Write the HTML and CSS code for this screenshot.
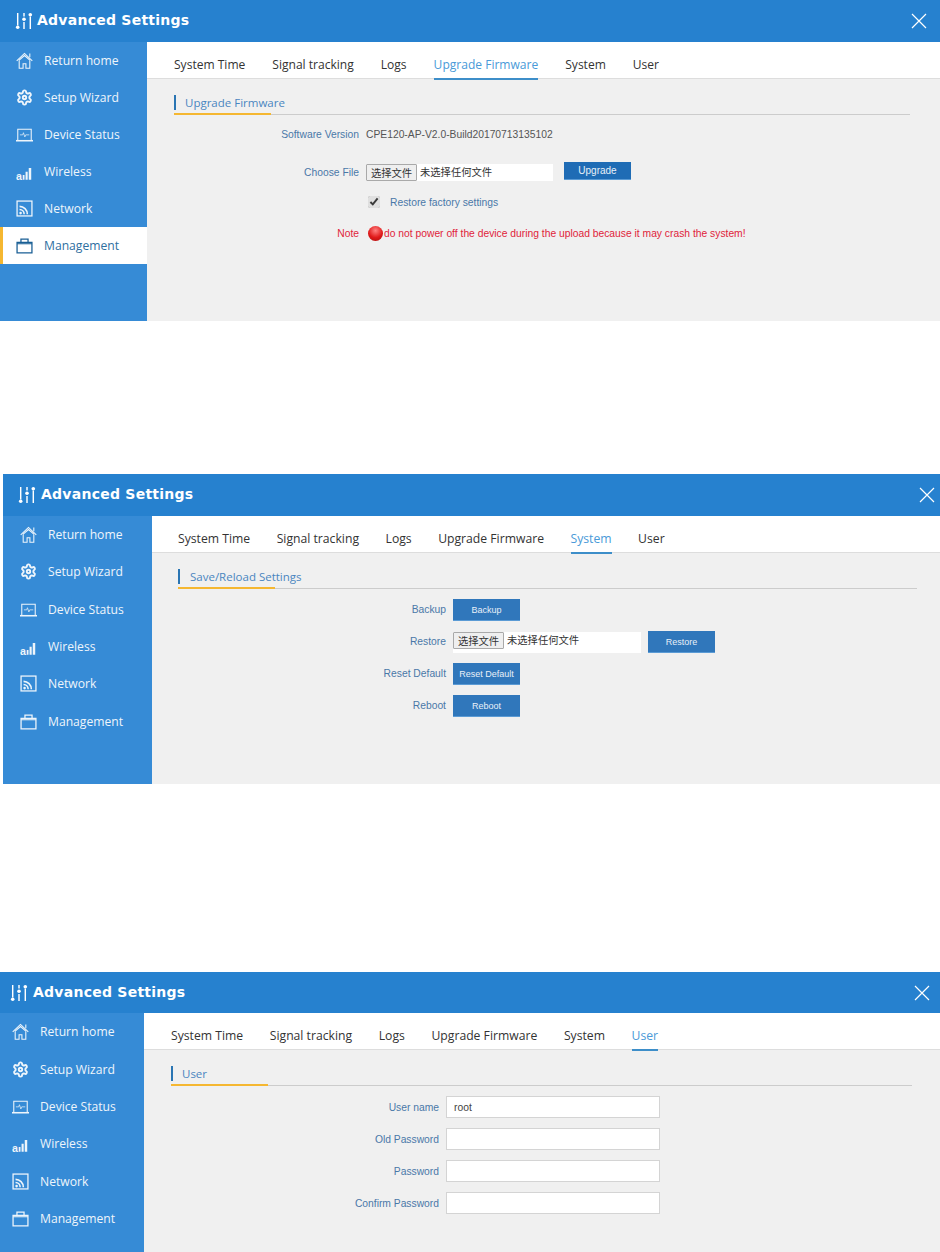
FILE: index.html
```html
<!DOCTYPE html>
<html lang="en">
<head>
    <meta charset="UTF-8">
    <title>Advanced Settings</title>
    <link rel="stylesheet" href="styles.css">
</head>
<body>
    <svg class="sprite" xmlns="http://www.w3.org/2000/svg">
        <symbol id="i-tune" viewBox="0 0 20 20">
            <path d="M3 1v14M10 1v4M10 11v8M17 5v14" fill="none" stroke="currentColor" stroke-width="1.6"/>
            <circle cx="3" cy="17" r="2" fill="currentColor"/>
            <circle cx="10" cy="8" r="2" fill="currentColor"/>
            <circle cx="17" cy="3" r="2" fill="currentColor"/>
        </symbol>
        <symbol id="i-close" viewBox="0 0 16 16">
            <path d="M1 1l14 14M15 1L1 15" fill="none" stroke="currentColor" stroke-width="1.2"/>
        </symbol>
        <symbol id="i-home" viewBox="0 0 24 24">
            <g fill="none" stroke="currentColor" stroke-width="1.5">
                <path d="M1 12.5L12 2l11 10.5M4.500 11.500L12 5l7.500 6.500"/>
                <path d="M4.500 11.500V23h5.500v-6.500h4V23h5.500V11.500M19.500 2v5.500"/>
            </g>
        </symbol>
        <symbol id="i-gear" viewBox="0 0 24 24">
            <g fill="none" stroke="currentColor" stroke-width="2.7">
                <path d="M12.22 2h-.44a2 2 0 0 0-2 2v.18a2 2 0 0 1-1 1.73l-.43.25a2 2 0 0 1-2 0l-.15-.08a2 2 0 0 0-2.73.73l-.22.38a2 2 0 0 0 .73 2.73l.15.1a2 2 0 0 1 1 1.72v.51a2 2 0 0 1-1 1.74l-.15.09a2 2 0 0 0-.73 2.73l.22.38a2 2 0 0 0 2.73.73l.15-.08a2 2 0 0 1 2 0l.43.25a2 2 0 0 1 1 1.73V20a2 2 0 0 0 2 2h.44a2 2 0 0 0 2-2v-.18a2 2 0 0 1 1-1.73l.43-.25a2 2 0 0 1 2 0l.15.08a2 2 0 0 0 2.73-.73l.22-.39a2 2 0 0 0-.73-2.73l-.15-.08a2 2 0 0 1-1-1.74v-.5a2 2 0 0 1 1-1.74l.15-.09a2 2 0 0 0 .73-2.73l-.22-.38a2 2 0 0 0-2.73-.73l-.15.08a2 2 0 0 1-2 0l-.43-.25a2 2 0 0 1-1-1.73V4a2 2 0 0 0-2-2z"/>
                <circle cx="12" cy="12" r="2.4"/>
            </g>
        </symbol>
        <symbol id="i-laptop" viewBox="0 0 24 24">
            <g fill="none" stroke="currentColor">
                <path d="M2.500 20V4.500h19V20" stroke-width="1.500"/>
                <path d="M0 20.800h24" stroke-width="2.200"/>
                <path d="M5.500 12.500h4l1-3 2 6 1.200-3h5" stroke-width="1"/>
            </g>
        </symbol>
        <symbol id="i-signal" viewBox="0 0 24 24">
            <text x="0" y="23.500" font-family="Liberation Sans" font-weight="700" font-size="15" fill="currentColor">a</text>
            <path d="M9.500 17h2.500v6.500H9.500zM13.500 12.500h3v11h-3zM18 7h3.500v16.500H18z" fill="currentColor"/>
        </symbol>
        <symbol id="i-rss" viewBox="0 0 24 24">
            <rect x="1.500" y="1.500" width="21" height="21" fill="none" stroke="currentColor" stroke-width="1.800"/>
            <path d="M5 9a11 11 0 0 1 11 11M5 13.500a6.500 6.500 0 0 1 6.500 6.500" fill="none" stroke="currentColor" stroke-width="2.200"/>
            <circle cx="6.500" cy="18.500" r="1.800" fill="currentColor"/>
        </symbol>
        <symbol id="i-case" viewBox="0 0 24 24">
            <g fill="none" stroke="currentColor" stroke-width="1.800">
                <path d="M1.500 7.500v15h21v-15z"/>
                <path d="M7 7.500V3h10v4.500"/>
                <path d="M1.500 9.500h21" stroke-width="1.500"/>
            </g>
        </symbol>
    </svg>

    <section class="panel panel-a">
        <header class="topbar">
            <svg class="tune-icon"><use href="#i-tune"/></svg>
            <span class="title">Advanced Settings</span>
            <svg class="close-icon"><use href="#i-close"/></svg>
        </header>
        <div class="main">
            <nav class="sidebar">
                <a class="nav-item"><svg><use href="#i-home"/></svg>Return home</a>
                <a class="nav-item"><svg><use href="#i-gear"/></svg>Setup Wizard</a>
                <a class="nav-item"><svg><use href="#i-laptop"/></svg>Device Status</a>
                <a class="nav-item"><svg><use href="#i-signal"/></svg>Wireless</a>
                <a class="nav-item"><svg><use href="#i-rss"/></svg>Network</a>
                <a class="nav-item active"><svg><use href="#i-case"/></svg>Management</a>
            </nav>
            <div class="content">
                <div class="tabs">
                    <a class="tab">System Time</a>
                    <a class="tab">Signal tracking</a>
                    <a class="tab">Logs</a>
                    <a class="tab active">Upgrade Firmware</a>
                    <a class="tab">System</a>
                    <a class="tab">User</a>
                </div>
                <div class="section">
                    <h2 class="section-title"><span>Upgrade Firmware</span></h2>
                    <div class="form">
                        <div class="row">
                            <label class="row-label">Software Version</label>
                            <span class="value">CPE120-AP-V2.0-Build20170713135102</span>
                        </div>
                        <div class="row row-choose">
                            <label class="row-label">Choose File</label>
                            <div class="file-box"><button class="file-btn">选择文件</button><span>未选择任何文件</span></div>
                            <button class="btn btn-dark">Upgrade</button>
                        </div>
                        <div class="row row-check">
                            <span class="row-label"></span>
                            <input class="check" type="checkbox" checked>
                            <label class="check-label">Restore factory settings</label>
                        </div>
                        <div class="row row-note">
                            <label class="row-label note">Note</label>
                            <span class="ball"></span>
                            <span class="note">do not power off the device during the upload because it may crash the system!</span>
                        </div>
                    </div>
                </div>
            </div>
        </div>
    </section>

    <section class="panel panel-b">
        <header class="topbar">
            <svg class="tune-icon"><use href="#i-tune"/></svg>
            <span class="title">Advanced Settings</span>
            <svg class="close-icon"><use href="#i-close"/></svg>
        </header>
        <div class="main">
            <nav class="sidebar">
                <a class="nav-item"><svg><use href="#i-home"/></svg>Return home</a>
                <a class="nav-item"><svg><use href="#i-gear"/></svg>Setup Wizard</a>
                <a class="nav-item"><svg><use href="#i-laptop"/></svg>Device Status</a>
                <a class="nav-item"><svg><use href="#i-signal"/></svg>Wireless</a>
                <a class="nav-item"><svg><use href="#i-rss"/></svg>Network</a>
                <a class="nav-item"><svg><use href="#i-case"/></svg>Management</a>
            </nav>
            <div class="content">
                <div class="tabs">
                    <a class="tab">System Time</a>
                    <a class="tab">Signal tracking</a>
                    <a class="tab">Logs</a>
                    <a class="tab">Upgrade Firmware</a>
                    <a class="tab active">System</a>
                    <a class="tab">User</a>
                </div>
                <div class="section">
                    <h2 class="section-title"><span>Save/Reload Settings</span></h2>
                    <div class="form form-tight">
                        <div class="row">
                            <label class="row-label">Backup</label>
                            <button class="btn">Backup</button>
                        </div>
                        <div class="row">
                            <label class="row-label">Restore</label>
                            <div class="file-box"><button class="file-btn">选择文件</button><span>未选择任何文件</span></div>
                            <button class="btn">Restore</button>
                        </div>
                        <div class="row">
                            <label class="row-label">Reset Default</label>
                            <button class="btn">Reset Default</button>
                        </div>
                        <div class="row">
                            <label class="row-label">Reboot</label>
                            <button class="btn">Reboot</button>
                        </div>
                    </div>
                </div>
            </div>
        </div>
    </section>

    <section class="panel panel-c">
        <header class="topbar">
            <svg class="tune-icon"><use href="#i-tune"/></svg>
            <span class="title">Advanced Settings</span>
            <svg class="close-icon"><use href="#i-close"/></svg>
        </header>
        <div class="main">
            <nav class="sidebar">
                <a class="nav-item"><svg><use href="#i-home"/></svg>Return home</a>
                <a class="nav-item"><svg><use href="#i-gear"/></svg>Setup Wizard</a>
                <a class="nav-item"><svg><use href="#i-laptop"/></svg>Device Status</a>
                <a class="nav-item"><svg><use href="#i-signal"/></svg>Wireless</a>
                <a class="nav-item"><svg><use href="#i-rss"/></svg>Network</a>
                <a class="nav-item"><svg><use href="#i-case"/></svg>Management</a>
            </nav>
            <div class="content">
                <div class="tabs">
                    <a class="tab">System Time</a>
                    <a class="tab">Signal tracking</a>
                    <a class="tab">Logs</a>
                    <a class="tab">Upgrade Firmware</a>
                    <a class="tab">System</a>
                    <a class="tab active">User</a>
                </div>
                <div class="section">
                    <h2 class="section-title"><span>User</span></h2>
                    <div class="form form-tight">
                        <div class="row">
                            <label class="row-label">User name</label>
                            <input class="text-input" type="text" value="root">
                        </div>
                        <div class="row">
                            <label class="row-label">Old Password</label>
                            <input class="text-input" type="password">
                        </div>
                        <div class="row">
                            <label class="row-label">Password</label>
                            <input class="text-input" type="password">
                        </div>
                        <div class="row">
                            <label class="row-label">Confirm Password</label>
                            <input class="text-input" type="password">
                        </div>
                    </div>
                </div>
            </div>
        </div>
    </section>
</body>
</html>
```

FILE: styles.css
```css
body {
    margin: 0;
    font-family: "Liberation Sans", "Noto Sans CJK SC", sans-serif;
    background: white;
    overflow: hidden;
}
.sprite {
    display: none;
}
.panel {
    display: flex;
    flex-direction: column;
}
.panel-a {
    height: 321px;
    margin-bottom: 153px;
    --side: 147px;
    --pad: 16px;
    --tool: 15px;
    --label: 185px;
    --gutter: 27px;
    --end: 30px;
    --item: 37px;
    --tab-font: 12.050px;
    --tab-gap: 27px;
}
.panel-b {
    height: 310px;
    margin-left: 3px;
    margin-bottom: 188px;
    --side: 149px;
    --pad: 17px;
    --tool: 15px;
    --label: 268px;
    --gutter: 26px;
    --end: 23px;
    --item: 37.300px;
    --tab-font: 12.200px;
    --tab-gap: 26.500px;
}
.panel-c {
    height: 280px;
    --side: 144px;
    --pad: 12px;
    --tool: 10px;
    --label: 268px;
    --gutter: 27px;
    --end: 28px;
    --item: 37.400px;
    --tab-font: 12.200px;
    --tab-gap: 26.600px;
}
.topbar {
    display: flex;
    align-items: center;
    flex: none;
    height: 42px;
    padding: 0 13px 0 var(--tool);
    background-color: #2681cf;
    color: white;
}
.panel-b .topbar {
    padding-right: 5px;
}
.panel-c .topbar {
    height: 41px;
    padding-right: 10px;
}
.tune-icon {
    width: 18px;
    height: 18px;
    margin-right: 4px;
}
.panel-b .tune-icon {
    margin-right: 5px;
}
.panel-c .tune-icon {
    margin-right: 5px;
}
.title {
    flex: 1;
    padding-bottom: 2px;
    font-family: "DejaVu Sans", sans-serif;
    font-size: 14px;
    font-weight: 700;
    letter-spacing: 0.250px;
}
.close-icon {
    width: 16px;
    height: 16px;
}
.main {
    display: flex;
    flex: 1;
    min-height: 0;
}
.sidebar {
    flex: none;
    width: var(--side);
    background-color: #368bd6;
}
.nav-item {
    display: flex;
    align-items: center;
    height: var(--item);
    padding-left: var(--pad);
    font-family: "Open Sans", sans-serif;
    font-size: 12.150px;
    color: #eef5fb;
}
.nav-item svg {
    flex: none;
    width: 17px;
    height: 17px;
    margin-right: 11px;
}
.nav-item.active {
    padding-left: calc(var(--pad) - 3px);
    border-left: 3px solid #f5b731;
    background-color: white;
    color: #2f6f9f;
}
.nav-item.active svg {
    color: #1a5f95;
}
.content {
    flex: 1;
    min-width: 0;
    background-color: #f0f0f0;
}
.tabs {
    display: flex;
    gap: var(--tab-gap);
    height: 36px;
    padding-left: var(--gutter);
    border-bottom: 1px solid #dddddd;
    background-color: white;
}
.tab {
    padding-top: 14px;
    font-family: "Open Sans", sans-serif;
    font-size: var(--tab-font);
    color: #333333;
}
.tab.active {
    height: 22px;
    border-bottom: 2px solid #3d8ec9;
    color: #4a9ad8;
}
.section {
    padding: 0 var(--end) 0 var(--gutter);
}
.section-title {
    position: relative;
    height: 36px;
    margin: 0;
    border-bottom: 1px solid #cccccc;
    box-sizing: border-box;
    font-weight: 400;
}
.section-title::after {
    content: "";
    position: absolute;
    left: 0;
    bottom: -1px;
    width: 97px;
    height: 2px;
    background-color: #f5b731;
}
.section-title span {
    position: absolute;
    top: 16px;
    left: 0;
    height: 15px;
    padding-left: 9px;
    border-left: 2px solid #2a75b3;
    font-family: "Open Sans", sans-serif;
    font-size: 11.500px;
    line-height: 15px;
    color: #4a86c0;
}
.panel-b .section-title span {
    padding-left: 10px;
}
.form {
    display: flex;
    flex-direction: column;
    gap: 10px;
    padding-top: 9px;
}
.form-tight {
    padding-top: 10px;
}
.row {
    display: flex;
    align-items: center;
    gap: 7px;
    min-height: 20px;
    font-size: 10.300px;
}
.row-choose {
    margin-top: 7px;
}
.row-choose .row-label {
    padding-top: 2px;
}
.panel-b .row-label {
    padding-bottom: 2px;
}
.row-check {
    margin-top: 1px;
}
.row-note {
    margin-top: 1px;
}
.row-label {
    flex: none;
    width: var(--label);
    text-align: right;
    color: #4a78a8;
}
.value {
    color: #555555;
}
.file-box {
    display: flex;
    align-items: flex-start;
    width: 188px;
    height: 21px;
    background-color: white;
    color: #333333;
}
.file-box span {
    margin-left: 3px;
    line-height: 17px;
}
.file-btn {
    flex: none;
    height: 17px;
    width: 51px;
    padding: 0;
    border: 1px solid #a9a9a9;
    border-radius: 1px;
    background-color: #efefef;
    font-family: inherit;
    font-size: 10.300px;
    color: #333333;
}
.btn {
    width: 67px;
    height: 22px;
    padding: 0;
    border: none;
    border-bottom: 1px solid #5b9bd5;
    background-color: #3077bb;
    font-family: inherit;
    font-size: 9px;
    color: #e8f0f8;
}
.row-choose .file-box {
    align-self: flex-end;
    width: 187px;
    height: 17px;
}
.row-choose .btn {
    height: 18px;
    margin-left: 4px;
    font-size: 10px;
}
.btn-dark {
    background-color: #1f6cb5;
}
.check {
    width: 12px;
    height: 12px;
    margin: 0 3px 0 2px;
    accent-color: #e0e0e0;
}
.check-label {
    color: #4a78a8;
}
.note {
    color: #e0233a;
}
.ball {
    flex: none;
    width: 15px;
    height: 15px;
    margin-left: 2px;
    margin-right: -6px;
    border-radius: 50%;
    background: radial-gradient(circle at 50% 30%, #ff8080, #e01a1a 55%, #a80f0f);
}
.text-input {
    box-sizing: border-box;
    width: 214px;
    height: 22px;
    padding: 0 7px;
    border: 1px solid #d4d4d4;
    background-color: white;
    font-family: inherit;
    font-size: 10.300px;
    color: #444444;
}
```
